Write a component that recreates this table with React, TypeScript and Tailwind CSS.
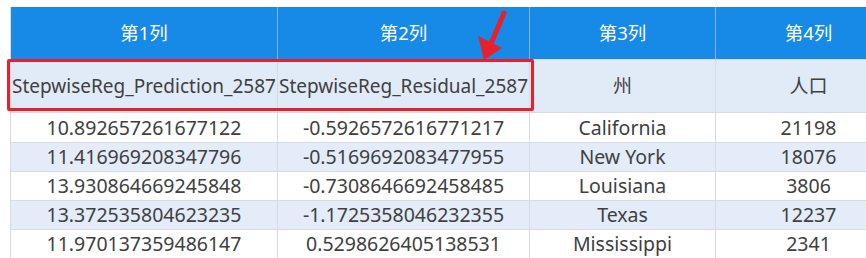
import React from "react";

const rows = [
  ["10.892657261677122", "-0.5926572616771217", "California", "21198"],
  ["11.416969208347796", "-0.5169692083477955", "New York", "18076"],
  ["13.930864669245848", "-0.7308646692458485", "Louisiana", "3806"],
  ["13.372535804623235", "-1.1725358046232355", "Texas", "12237"],
  ["11.970137359486147", "0.5298626405138531", "Mississippi", "2341"],
];

const cols = "grid grid-cols-[267px_252px_186px_186px]";

export default function App() {
  return (
    <div
      className="relative w-[866px] h-[258px] overflow-hidden bg-white pt-[7px] pl-[10px] text-[#404040]"
      style={{ fontFamily: '"Noto Sans", "Noto Sans CJK SC", sans-serif' }}
    >
      <div className="w-[891px] border-l border-[#d8dce2]">
        {/* header */}
        <div className={`${cols} h-[53px] bg-[#1789e6] text-white text-[18.5px]`}>
          {["第1列", "第2列", "第3列", "第4列"].map((h) => (
            <div key={h} className="flex items-center justify-center border-r border-[#7fb6ea] border-b border-b-[#d8dce2]">
              {h}
            </div>
          ))}
        </div>
        {/* field names */}
        <div className={`${cols} h-[53px] bg-[#e1ebf8] text-[19px]`}>
          {["StepwiseReg_Prediction_2587", "StepwiseReg_Residual_2587", "州", "人口"].map((h) => (
            <div key={h} className="flex items-center justify-center whitespace-nowrap border-r border-b border-[#d8dce2]">
              {h}
            </div>
          ))}
        </div>
        {rows.map((r, i) => (
          <div key={i} className={`${cols} h-[29px] text-[19.5px] ${i % 2 ? "bg-[#e3ecf8]" : "bg-white"}`}>
            {r.map((c, j) => (
              <div key={j} className="flex items-center justify-center whitespace-nowrap border-r border-b border-[#d8dce2]">
                {c}
              </div>
            ))}
          </div>
        ))}
      </div>

      {/* highlight box */}
      <div className="absolute left-[7px] top-[59px] w-[527px] h-[52px] border-[3px] border-[#e8202a] rounded-[2px]" />

      {/* arrow */}
      <svg className="absolute left-[470px] top-[8px]" width="44" height="56" viewBox="0 0 44 56">
        <line x1="34" y1="5" x2="20" y2="38" stroke="#e8202a" strokeWidth="5" strokeLinecap="round" />
        <polygon points="14,52 8,28 32,40" fill="#e8202a" />
      </svg>
    </div>
  );
}
